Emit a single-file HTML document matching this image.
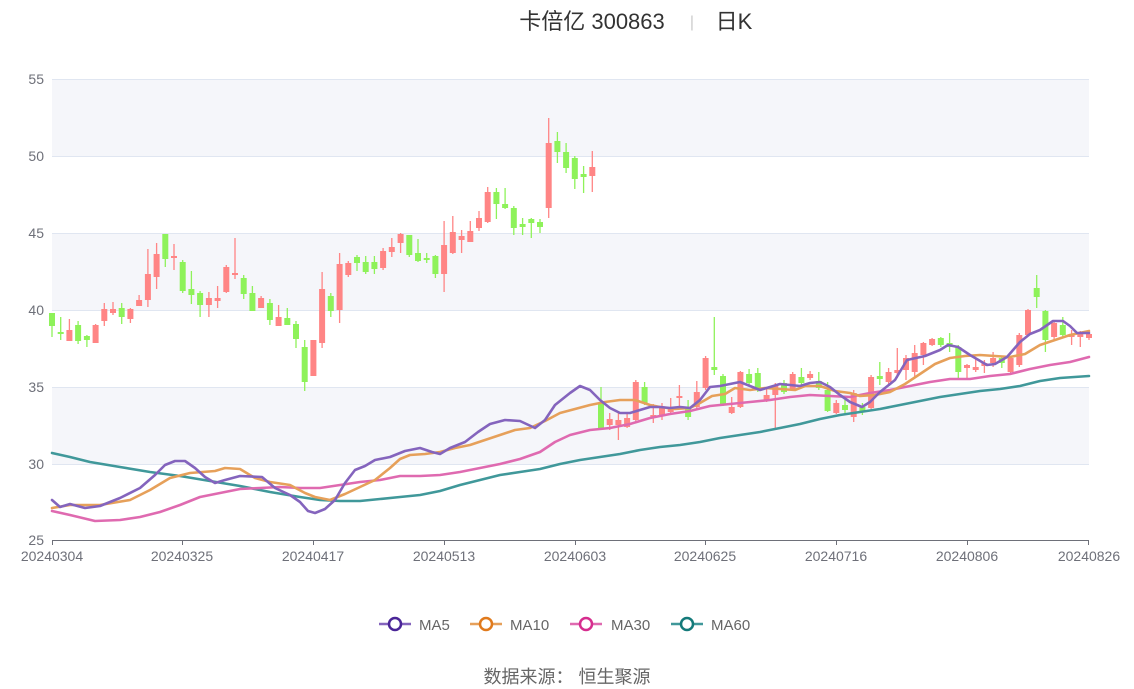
<!DOCTYPE html>
<html><head><meta charset="utf-8"><style>
html,body{margin:0;padding:0;background:#fff;width:1134px;height:689px;overflow:hidden}
svg{display:block}
text{font-family:"Liberation Sans","Noto Sans CJK SC",sans-serif}
.r line{stroke:#ff8585;stroke-width:1.3}.r rect{fill:#ff8585}
.g line{stroke:#8ef25a;stroke-width:1.3}.g rect{fill:#8ef25a}
</style></head><body>
<svg width="1134" height="689" viewBox="0 0 1134 689" xmlns="http://www.w3.org/2000/svg">
<rect x="52" y="79" width="1037" height="77" fill="#f5f6fa"/>
<rect x="52" y="233" width="1037" height="77" fill="#f5f6fa"/>
<rect x="52" y="387" width="1037" height="77" fill="#f5f6fa"/>
<g stroke="#e0e6f1" stroke-width="1">
<line x1="52" x2="1089" y1="79.5" y2="79.5"/><line x1="52" x2="1089" y1="156.5" y2="156.5"/>
<line x1="52" x2="1089" y1="233.5" y2="233.5"/><line x1="52" x2="1089" y1="310.5" y2="310.5"/>
<line x1="52" x2="1089" y1="387.5" y2="387.5"/><line x1="52" x2="1089" y1="464.5" y2="464.5"/>
</g>
<line x1="52" x2="1089" y1="540.5" y2="540.5" stroke="#6e7079"/>
<g stroke="#6e7079"><line x1="52.5" x2="52.5" y1="540" y2="545"/><line x1="182.5" x2="182.5" y1="540" y2="545"/><line x1="313.5" x2="313.5" y1="540" y2="545"/><line x1="444.5" x2="444.5" y1="540" y2="545"/><line x1="575.5" x2="575.5" y1="540" y2="545"/><line x1="705.5" x2="705.5" y1="540" y2="545"/><line x1="836.5" x2="836.5" y1="540" y2="545"/><line x1="967.5" x2="967.5" y1="540" y2="545"/><line x1="1088.5" x2="1088.5" y1="540" y2="545"/></g>
<g fill="#6e7079" font-size="14" text-anchor="end">
<text x="44" y="84">55</text><text x="44" y="161">50</text><text x="44" y="238">45</text><text x="44" y="315">40</text><text x="44" y="392">35</text><text x="44" y="469">30</text><text x="44" y="545">25</text>
</g>
<g fill="#6e7079" font-size="14" text-anchor="middle">
<text x="52" y="561">20240304</text><text x="182" y="561">20240325</text><text x="313" y="561">20240417</text><text x="444" y="561">20240513</text><text x="575" y="561">20240603</text><text x="705" y="561">20240625</text><text x="836" y="561">20240716</text><text x="967" y="561">20240806</text><text x="1089" y="561">20240826</text>
</g>
<g class="g"><line x1="52" x2="52" y1="313" y2="337"/><rect x="49" y="313" width="6" height="13"/></g>
<g class="g"><line x1="60.7" x2="60.7" y1="317" y2="340"/><rect x="57.7" y="332" width="6" height="2"/></g>
<g class="r"><line x1="69.4" x2="69.4" y1="319" y2="341"/><rect x="66.4" y="330" width="6" height="11"/></g>
<g class="g"><line x1="78.1" x2="78.1" y1="321" y2="344"/><rect x="75.1" y="325" width="6" height="16"/></g>
<g class="g"><line x1="86.9" x2="86.9" y1="335" y2="347"/><rect x="83.9" y="336" width="6" height="4"/></g>
<g class="r"><line x1="95.6" x2="95.6" y1="324" y2="343"/><rect x="92.6" y="325" width="6" height="18"/></g>
<g class="r"><line x1="104.3" x2="104.3" y1="303" y2="326"/><rect x="101.3" y="309" width="6" height="12"/></g>
<g class="r"><line x1="113" x2="113" y1="302" y2="315"/><rect x="110" y="309" width="6" height="4"/></g>
<g class="g"><line x1="121.7" x2="121.7" y1="303" y2="324"/><rect x="118.7" y="308" width="6" height="9"/></g>
<g class="r"><line x1="130.4" x2="130.4" y1="308" y2="323"/><rect x="127.4" y="309" width="6" height="10"/></g>
<g class="r"><line x1="139.1" x2="139.1" y1="295" y2="306"/><rect x="136.1" y="300" width="6" height="6"/></g>
<g class="r"><line x1="147.9" x2="147.9" y1="249" y2="307"/><rect x="144.9" y="274" width="6" height="26"/></g>
<g class="r"><line x1="156.6" x2="156.6" y1="243" y2="289"/><rect x="153.6" y="254" width="6" height="23"/></g>
<g class="g"><line x1="165.3" x2="165.3" y1="234" y2="267"/><rect x="162.3" y="234" width="6" height="25"/></g>
<g class="r"><line x1="174" x2="174" y1="244" y2="270"/><rect x="171" y="256" width="6" height="2"/></g>
<g class="g"><line x1="182.7" x2="182.7" y1="260" y2="293"/><rect x="179.7" y="262" width="6" height="29"/></g>
<g class="g"><line x1="191.4" x2="191.4" y1="271" y2="304"/><rect x="188.4" y="289" width="6" height="6"/></g>
<g class="g"><line x1="200.1" x2="200.1" y1="291" y2="317"/><rect x="197.1" y="293" width="6" height="12"/></g>
<g class="r"><line x1="208.9" x2="208.9" y1="292" y2="317"/><rect x="205.9" y="298" width="6" height="7"/></g>
<g class="r"><line x1="217.6" x2="217.6" y1="286" y2="308"/><rect x="214.6" y="298" width="6" height="3"/></g>
<g class="r"><line x1="226.3" x2="226.3" y1="265" y2="293"/><rect x="223.3" y="267" width="6" height="25"/></g>
<g class="r"><line x1="235" x2="235" y1="238" y2="279"/><rect x="232" y="273" width="6" height="2"/></g>
<g class="g"><line x1="243.7" x2="243.7" y1="275" y2="299"/><rect x="240.7" y="278" width="6" height="16"/></g>
<g class="g"><line x1="252.4" x2="252.4" y1="286" y2="311"/><rect x="249.4" y="293" width="6" height="18"/></g>
<g class="r"><line x1="261.1" x2="261.1" y1="296" y2="308"/><rect x="258.1" y="298" width="6" height="10"/></g>
<g class="g"><line x1="269.9" x2="269.9" y1="299" y2="325"/><rect x="266.9" y="303" width="6" height="17"/></g>
<g class="r"><line x1="278.6" x2="278.6" y1="305" y2="326"/><rect x="275.6" y="317" width="6" height="9"/></g>
<g class="g"><line x1="287.3" x2="287.3" y1="308" y2="325"/><rect x="284.3" y="318" width="6" height="7"/></g>
<g class="g"><line x1="296" x2="296" y1="321" y2="348"/><rect x="293" y="324" width="6" height="15"/></g>
<g class="g"><line x1="304.7" x2="304.7" y1="340" y2="391"/><rect x="301.7" y="347" width="6" height="35"/></g>
<g class="r"><line x1="313.4" x2="313.4" y1="340" y2="376"/><rect x="310.4" y="340" width="6" height="36"/></g>
<g class="r"><line x1="322.1" x2="322.1" y1="272" y2="348"/><rect x="319.1" y="289" width="6" height="54"/></g>
<g class="g"><line x1="330.8" x2="330.8" y1="293" y2="317"/><rect x="327.8" y="296" width="6" height="15"/></g>
<g class="r"><line x1="339.6" x2="339.6" y1="253" y2="323"/><rect x="336.6" y="264" width="6" height="46"/></g>
<g class="r"><line x1="348.3" x2="348.3" y1="261" y2="277"/><rect x="345.3" y="263" width="6" height="12"/></g>
<g class="g"><line x1="357" x2="357" y1="255" y2="271"/><rect x="354" y="257" width="6" height="6"/></g>
<g class="g"><line x1="365.7" x2="365.7" y1="256" y2="274"/><rect x="362.7" y="262" width="6" height="10"/></g>
<g class="g"><line x1="374.4" x2="374.4" y1="256" y2="274"/><rect x="371.4" y="262" width="6" height="7"/></g>
<g class="r"><line x1="383.1" x2="383.1" y1="248" y2="270"/><rect x="380.1" y="251" width="6" height="17"/></g>
<g class="r"><line x1="391.8" x2="391.8" y1="238" y2="257"/><rect x="388.8" y="247" width="6" height="5"/></g>
<g class="r"><line x1="400.6" x2="400.6" y1="233" y2="253"/><rect x="397.6" y="234" width="6" height="9"/></g>
<g class="g"><line x1="409.3" x2="409.3" y1="235" y2="257"/><rect x="406.3" y="235" width="6" height="20"/></g>
<g class="g"><line x1="418" x2="418" y1="239" y2="262"/><rect x="415" y="253" width="6" height="8"/></g>
<g class="g"><line x1="426.7" x2="426.7" y1="253" y2="263"/><rect x="423.7" y="258" width="6" height="2"/></g>
<g class="g"><line x1="435.4" x2="435.4" y1="255" y2="278"/><rect x="432.4" y="256" width="6" height="18"/></g>
<g class="r"><line x1="444.1" x2="444.1" y1="221" y2="292"/><rect x="441.1" y="245" width="6" height="29"/></g>
<g class="r"><line x1="452.8" x2="452.8" y1="216" y2="254"/><rect x="449.8" y="232" width="6" height="21"/></g>
<g class="r"><line x1="461.6" x2="461.6" y1="230" y2="253"/><rect x="458.6" y="236" width="6" height="4"/></g>
<g class="r"><line x1="470.3" x2="470.3" y1="221" y2="242"/><rect x="467.3" y="231" width="6" height="11"/></g>
<g class="r"><line x1="479" x2="479" y1="211" y2="231"/><rect x="476" y="218" width="6" height="10"/></g>
<g class="r"><line x1="487.7" x2="487.7" y1="187" y2="223"/><rect x="484.7" y="192" width="6" height="30"/></g>
<g class="g"><line x1="496.4" x2="496.4" y1="188" y2="219"/><rect x="493.4" y="192" width="6" height="12"/></g>
<g class="g"><line x1="505.1" x2="505.1" y1="188" y2="209"/><rect x="502.1" y="204" width="6" height="4"/></g>
<g class="g"><line x1="513.8" x2="513.8" y1="206" y2="235"/><rect x="510.8" y="208" width="6" height="20"/></g>
<g class="g"><line x1="522.6" x2="522.6" y1="218" y2="235"/><rect x="519.6" y="224" width="6" height="3"/></g>
<g class="g"><line x1="531.3" x2="531.3" y1="218" y2="238"/><rect x="528.3" y="219" width="6" height="4"/></g>
<g class="g"><line x1="540" x2="540" y1="219" y2="233"/><rect x="537" y="222" width="6" height="5"/></g>
<g class="r"><line x1="548.7" x2="548.7" y1="118" y2="218"/><rect x="545.7" y="143" width="6" height="65"/></g>
<g class="g"><line x1="557.4" x2="557.4" y1="132" y2="163"/><rect x="554.4" y="141" width="6" height="11"/></g>
<g class="g"><line x1="566.1" x2="566.1" y1="143" y2="173"/><rect x="563.1" y="152" width="6" height="16"/></g>
<g class="g"><line x1="574.8" x2="574.8" y1="156" y2="189"/><rect x="571.8" y="158" width="6" height="21"/></g>
<g class="g"><line x1="583.6" x2="583.6" y1="166" y2="193"/><rect x="580.6" y="174" width="6" height="3"/></g>
<g class="r"><line x1="592.3" x2="592.3" y1="151" y2="192"/><rect x="589.3" y="167" width="6" height="9"/></g>
<g class="g"><line x1="601" x2="601" y1="387" y2="428"/><rect x="598" y="403" width="6" height="25"/></g>
<g class="r"><line x1="609.7" x2="609.7" y1="413" y2="430"/><rect x="606.7" y="419" width="6" height="6"/></g>
<g class="r"><line x1="618.4" x2="618.4" y1="413" y2="440"/><rect x="615.4" y="420" width="6" height="5"/></g>
<g class="r"><line x1="627.1" x2="627.1" y1="413" y2="428"/><rect x="624.1" y="418" width="6" height="9"/></g>
<g class="r"><line x1="635.8" x2="635.8" y1="380" y2="422"/><rect x="632.8" y="382" width="6" height="38"/></g>
<g class="g"><line x1="644.6" x2="644.6" y1="382" y2="405"/><rect x="641.6" y="387" width="6" height="16"/></g>
<g class="r"><line x1="653.3" x2="653.3" y1="404" y2="423"/><rect x="650.3" y="415" width="6" height="3"/></g>
<g class="r"><line x1="662" x2="662" y1="403" y2="420"/><rect x="659" y="407" width="6" height="8"/></g>
<g class="r"><line x1="670.7" x2="670.7" y1="398" y2="415"/><rect x="667.7" y="407" width="6" height="5"/></g>
<g class="r"><line x1="679.4" x2="679.4" y1="385" y2="407"/><rect x="676.4" y="396" width="6" height="2"/></g>
<g class="g"><line x1="688.1" x2="688.1" y1="400" y2="420"/><rect x="685.1" y="408" width="6" height="9"/></g>
<g class="r"><line x1="696.8" x2="696.8" y1="381" y2="410"/><rect x="693.8" y="392" width="6" height="15"/></g>
<g class="r"><line x1="705.6" x2="705.6" y1="356" y2="390"/><rect x="702.6" y="358" width="6" height="30"/></g>
<g class="g"><line x1="714.3" x2="714.3" y1="317" y2="375"/><rect x="711.3" y="367" width="6" height="3"/></g>
<g class="g"><line x1="723" x2="723" y1="374" y2="406"/><rect x="720" y="376" width="6" height="29"/></g>
<g class="r"><line x1="731.7" x2="731.7" y1="397" y2="414"/><rect x="728.7" y="407" width="6" height="6"/></g>
<g class="r"><line x1="740.4" x2="740.4" y1="371" y2="408"/><rect x="737.4" y="372" width="6" height="35"/></g>
<g class="g"><line x1="749.1" x2="749.1" y1="369" y2="385"/><rect x="746.1" y="374" width="6" height="9"/></g>
<g class="g"><line x1="757.8" x2="757.8" y1="368" y2="392"/><rect x="754.8" y="373" width="6" height="17"/></g>
<g class="r"><line x1="766.6" x2="766.6" y1="389" y2="402"/><rect x="763.6" y="395" width="6" height="5"/></g>
<g class="r"><line x1="775.3" x2="775.3" y1="383" y2="428"/><rect x="772.3" y="385" width="6" height="10"/></g>
<g class="g"><line x1="784" x2="784" y1="380" y2="394"/><rect x="781" y="383" width="6" height="9"/></g>
<g class="r"><line x1="792.7" x2="792.7" y1="372" y2="391"/><rect x="789.7" y="374" width="6" height="16"/></g>
<g class="g"><line x1="801.4" x2="801.4" y1="368" y2="385"/><rect x="798.4" y="377" width="6" height="6"/></g>
<g class="r"><line x1="810.1" x2="810.1" y1="371" y2="380"/><rect x="807.1" y="374" width="6" height="4"/></g>
<g class="g"><line x1="818.8" x2="818.8" y1="372" y2="390"/><rect x="815.8" y="381" width="6" height="7"/></g>
<g class="g"><line x1="827.6" x2="827.6" y1="382" y2="412"/><rect x="824.6" y="390" width="6" height="21"/></g>
<g class="r"><line x1="836.3" x2="836.3" y1="400" y2="414"/><rect x="833.3" y="403" width="6" height="10"/></g>
<g class="g"><line x1="845" x2="845" y1="400" y2="413"/><rect x="842" y="405" width="6" height="5"/></g>
<g class="r"><line x1="853.7" x2="853.7" y1="390" y2="422"/><rect x="850.7" y="393" width="6" height="24"/></g>
<g class="g"><line x1="862.4" x2="862.4" y1="403" y2="415"/><rect x="859.4" y="407" width="6" height="5"/></g>
<g class="r"><line x1="871.1" x2="871.1" y1="375" y2="409"/><rect x="868.1" y="377" width="6" height="31"/></g>
<g class="g"><line x1="879.8" x2="879.8" y1="362" y2="385"/><rect x="876.8" y="376" width="6" height="3"/></g>
<g class="r"><line x1="888.6" x2="888.6" y1="368" y2="385"/><rect x="885.6" y="372" width="6" height="10"/></g>
<g class="r"><line x1="897.3" x2="897.3" y1="348" y2="378"/><rect x="894.3" y="370" width="6" height="3"/></g>
<g class="r"><line x1="906" x2="906" y1="355" y2="380"/><rect x="903" y="358" width="6" height="12"/></g>
<g class="r"><line x1="914.7" x2="914.7" y1="345" y2="378"/><rect x="911.7" y="353" width="6" height="19"/></g>
<g class="r"><line x1="923.4" x2="923.4" y1="342" y2="365"/><rect x="920.4" y="343" width="6" height="12"/></g>
<g class="r"><line x1="932.1" x2="932.1" y1="338" y2="346"/><rect x="929.1" y="339" width="6" height="6"/></g>
<g class="g"><line x1="940.8" x2="940.8" y1="337" y2="347"/><rect x="937.8" y="338" width="6" height="7"/></g>
<g class="g"><line x1="949.6" x2="949.6" y1="333" y2="352"/><rect x="946.6" y="343" width="6" height="4"/></g>
<g class="g"><line x1="958.3" x2="958.3" y1="345" y2="380"/><rect x="955.3" y="347" width="6" height="25"/></g>
<g class="r"><line x1="967" x2="967" y1="364" y2="378"/><rect x="964" y="365" width="6" height="3"/></g>
<g class="r"><line x1="975.7" x2="975.7" y1="358" y2="372"/><rect x="972.7" y="367" width="6" height="3"/></g>
<g class="r"><line x1="984.4" x2="984.4" y1="360" y2="373"/><rect x="981.4" y="363" width="6" height="3"/></g>
<g class="r"><line x1="993.1" x2="993.1" y1="352" y2="367"/><rect x="990.1" y="358" width="6" height="5"/></g>
<g class="g"><line x1="1001.8" x2="1001.8" y1="356" y2="368"/><rect x="998.8" y="358" width="6" height="5"/></g>
<g class="r"><line x1="1010.6" x2="1010.6" y1="356" y2="373"/><rect x="1007.6" y="358" width="6" height="14"/></g>
<g class="r"><line x1="1019.3" x2="1019.3" y1="333" y2="367"/><rect x="1016.3" y="335" width="6" height="30"/></g>
<g class="r"><line x1="1028" x2="1028" y1="309" y2="336"/><rect x="1025" y="310" width="6" height="25"/></g>
<g class="g"><line x1="1036.7" x2="1036.7" y1="275" y2="308"/><rect x="1033.7" y="288" width="6" height="9"/></g>
<g class="g"><line x1="1045.4" x2="1045.4" y1="310" y2="352"/><rect x="1042.4" y="311" width="6" height="29"/></g>
<g class="r"><line x1="1054.1" x2="1054.1" y1="320" y2="341"/><rect x="1051.1" y="323" width="6" height="14"/></g>
<g class="g"><line x1="1062.8" x2="1062.8" y1="317" y2="337"/><rect x="1059.8" y="325" width="6" height="10"/></g>
<g class="r"><line x1="1071.6" x2="1071.6" y1="330" y2="345"/><rect x="1068.6" y="335" width="6" height="2"/></g>
<g class="r"><line x1="1080.3" x2="1080.3" y1="331" y2="347"/><rect x="1077.3" y="333" width="6" height="4"/></g>
<g class="r"><line x1="1089" x2="1089" y1="332" y2="340"/><rect x="1086" y="334" width="6" height="4"/></g>
<g fill="none" stroke-width="2.6" stroke-linejoin="round" stroke-linecap="round">
<polyline stroke="#40989a" points="52,453 70,457 90,462 120,467 150,472 180,476 210,481 240,486 270,492 300,497 320,500 340,501 360,501 380,499 400,497 420,495 440,491 460,485 480,480 500,475 520,472 540,469 560,464 580,460 600,457 620,454 640,450 660,447 680,445 700,442 720,438 740,435 760,432 780,428 800,424 820,419 840,415 860,412 880,409 900,405 920,401 940,397 960,394 980,391 1000,389 1020,386 1040,381 1060,378 1089,376"/>
<polyline stroke="#df6ab0" points="52,511 70,515 95,521 120,520 140,517 160,512 180,505 200,497 220,493 240,489 260,488 280,487 300,488 320,488 340,485 360,482 380,480 400,476 420,476 440,475 460,472 480,468 500,464 520,459 540,452 555,442 570,435 590,430 610,428 630,424 650,418 670,414 690,411 710,406 730,404 750,402 770,400 790,397 810,395 830,396 850,397 870,393 890,390 910,386 930,382 950,379 970,379 990,376 1010,374 1030,369 1050,365 1070,362 1089,357"/>
<polyline stroke="#e6a05a" points="52,508 70,505 100,505 130,500 150,490 170,478 190,473 215,471 225,468 240,469 255,478 270,482 290,485 305,493 315,497 330,500 345,494 360,487 375,480 390,468 400,459 410,455 425,454 440,452 455,448 470,445 485,440 500,435 515,430 530,428 545,421 560,413 575,409 590,405 605,402 620,400 635,400 650,405 660,407 675,409 690,408 700,403 712,396 725,394 735,388 750,390 765,388 780,389 795,390 805,386 820,386 835,391 850,393 860,396 875,395 890,392 905,384 920,374 935,364 950,358 965,356 980,355 995,356 1010,357 1025,354 1040,345 1055,340 1070,335 1089,331"/>
<polyline stroke="#8464bd" points="52,500 60,507 70,504 85,508 100,506 120,498 140,488 155,475 165,465 175,461 185,461 195,468 205,477 215,483 225,480 240,476 262,477 275,488 290,495 300,502 308,511 315,513 325,509 335,500 345,483 355,470 365,466 375,460 390,457 405,451 420,448 432,452 440,454 450,448 465,442 478,432 490,424 505,420 520,421 535,428 545,420 555,405 570,393 580,386 590,390 600,400 610,408 620,413 630,413 640,410 650,407 660,407 670,408 680,407 690,408 700,400 710,387 720,386 730,384 740,382 750,386 760,390 770,387 780,384 790,385 800,386 810,383 820,382 830,387 840,395 850,402 862,407 870,402 880,392 895,380 907,360 925,356 940,350 948,345 958,347 970,355 987,365 995,364 1007,357 1020,342 1030,334 1040,330 1053,321 1063,321 1070,326 1077,333 1089,333"/>
</g>
<g stroke-width="2.5" fill="#fff">
<line x1="379" x2="411" y1="624" y2="624" stroke="#8464bd"/><circle cx="395" cy="624" r="6" stroke="#4a2597"/>
<line x1="470" x2="502" y1="624" y2="624" stroke="#e6a05a"/><circle cx="486" cy="624" r="6" stroke="#e07a1c"/>
<line x1="570" x2="602" y1="624" y2="624" stroke="#df6ab0"/><circle cx="586" cy="624" r="6" stroke="#d62d8e"/>
<line x1="671" x2="703" y1="624" y2="624" stroke="#40989a"/><circle cx="687" cy="624" r="6" stroke="#147a7a"/>
</g>
<g fill="#666" font-size="15">
<text x="419" y="630">MA5</text><text x="510" y="630">MA10</text><text x="611" y="630">MA30</text><text x="711" y="630">MA60</text>
</g>
<text x="592" y="29" font-size="22" fill="#333" text-anchor="middle">卡倍亿 300863</text>
<text x="692" y="27" font-size="16" fill="#ccc" text-anchor="middle">|</text>
<text x="734" y="29" font-size="22" fill="#333" text-anchor="middle">日K</text>
<text x="567" y="683" font-size="18" fill="#666" text-anchor="middle">数据来源：  恒生聚源</text>
</svg>
</body></html>
